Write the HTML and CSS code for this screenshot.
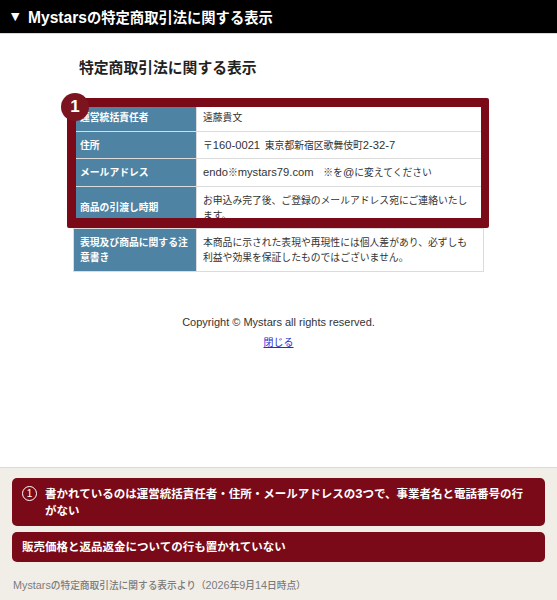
FILE: index.html
```html
<!DOCTYPE html>
<html lang="ja">
<head>
    <meta charset="UTF-8">
    <meta name="viewport" content="width=device-width, initial-scale=1.0">
    <title>Mystarsの特定商取引法に関する表示</title>
    <link rel="stylesheet" href="styles.css">
</head>
<body>
    <div class="page">
        <header class="top-bar">
            <span class="top-arrow">▼</span>
            <span><span class="top-latin">Mystars</span>の特定商取引法に関する表示</span>
        </header>

        <main class="content">
            <h1 class="page-title">特定商取引法に関する表示</h1>

            <div class="table-wrap">
                <table class="law-table">
                    <tr>
                        <th>運営統括責任者</th>
                        <td>遠藤貴文</td>
                    </tr>
                    <tr>
                        <th>住所</th>
                        <td>〒<span class="latin">160-0021</span> 東京都新宿区歌舞伎町<span class="latin">2-32-7</span></td>
                    </tr>
                    <tr>
                        <th>メールアドレス</th>
                        <td><span class="latin">endo</span>※<span class="latin">mystars79.com</span>　※を<span class="latin">@</span>に変えてください</td>
                    </tr>
                    <tr>
                        <th>商品の引渡し時期</th>
                        <td>お申込み完了後、ご登録のメールアドレス宛にご連絡いたします。</td>
                    </tr>
                    <tr>
                        <th>表現及び商品に関する注意書き</th>
                        <td>本商品に示された表現や再現性には個人差があり、必ずしも利益や効果を保証したものではございません。</td>
                    </tr>
                </table>

                <!-- highlight over the first four rows -->
                <div class="highlight"></div>
                <div class="badge">1</div>
            </div>

            <p class="copyright">Copyright © Mystars all rights reserved.</p>
            <a class="close-link" href="#">閉じる</a>
        </main>

        <footer class="notes">
            <div class="note">
                <span class="note-num">1</span>
                <span>書かれているのは運営統括責任者・住所・メールアドレスの<span class="note-latin">3</span>つで、事業者名と電話番号の行がない</span>
            </div>
            <div class="note">
                <span>販売価格と返品返金についての行も置かれていない</span>
            </div>
            <p class="source"><span class="source-latin">Mystars</span>の特定商取引法に関する表示より（<span class="source-latin">2026</span>年<span class="source-latin">9</span>月<span class="source-latin">14</span>日時点）</p>
        </footer>
    </div>
</body>
</html>
```

FILE: styles.css
```css
/* Global Styles */
body {
    margin: 0;
    font-family: "Liberation Sans", "Noto Sans CJK JP", sans-serif;
    background: #ffffff;
    color: #333333;
}

.page {
    display: flex;
    flex-direction: column;
    height: 600px;
    overflow: hidden;
}

/* Top bar */
.top-bar {
    display: flex;
    align-items: center;
    height: 34px;
    padding-left: 11px;
    background: #000000;
    border-bottom: 1px solid #d8d8d8;
    box-sizing: border-box;
    color: #ffffff;
    font-size: 14.3px;
    font-weight: bold;
}

.top-arrow {
    width: 17px;
    font-size: 11px;
    font-family: "DejaVu Sans", sans-serif;
}

.top-latin {
    font-size: 15.6px;
}

/* Main content */
.content {
    flex: 1;
    display: flex;
    flex-direction: column;
    align-items: center;
}

.page-title {
    align-self: flex-start;
    margin: 24px 0 0 79px;
    font-size: 14.8px;
    line-height: 20px;
    color: #222222;
}

.table-wrap {
    position: relative;
    align-self: flex-start;
    margin: 25px 0 0 73px;
}

.law-table {
    width: 411px;
    border-collapse: collapse;
    table-layout: fixed;
    font-size: 9.8px;
    line-height: 15px;
}

.law-table th,
.law-table td {
    padding: 6px 6px 5.5px;
    border: 1px solid #dcdcdc;
    text-align: left;
}

.law-table th {
    width: 110px;
    background: #4f83a3;
    color: #ffffff;
    font-weight: bold;
}

.law-table td {
    padding-right: 10px;
    background: #ffffff;
    color: #333333;
    word-spacing: 2px;
}

.latin {
    font-size: 11.2px;
}

.highlight {
    position: absolute;
    left: -6px;
    top: -5px;
    width: 422px;
    height: 130px;
    box-sizing: border-box;
    border-style: solid;
    border-color: #7a0a18;
    border-width: 9px 8px 10px 9px;
    border-radius: 2px;
}

.badge {
    position: absolute;
    left: -12px;
    top: -10px;
    width: 28px;
    height: 28px;
    border-radius: 50%;
    background: #7c1420;
    color: #ffffff;
    font-size: 17px;
    font-weight: bold;
    line-height: 28px;
    text-align: center;
}

.copyright {
    margin: 43px 0 0;
    font-size: 11px;
    line-height: 15px;
    color: #333333;
}

.close-link {
    margin-top: 5px;
    font-size: 10px;
    line-height: 15px;
    color: #2a2ad0;
}

/* Bottom notes */
.notes {
    height: 133px;
    padding: 10px 12px 0;
    box-sizing: border-box;
    background: #f1eee8;
    border-top: 1px solid #dedbd0;
}

.note {
    display: flex;
    align-items: flex-start;
    gap: 8px;
    margin-bottom: 6px;
    padding: 6.5px 18px 6.5px 10px;
    background: #7a0a18;
    border-radius: 5px;
    color: #ffffff;
    font-size: 11.5px;
    font-weight: bold;
    line-height: 17px;
}

.note-latin {
    font-size: 13px;
}

.note-num {
    flex: none;
    width: 13px;
    height: 13px;
    margin-top: 1px;
    border: 1px solid #ffffff;
    border-radius: 50%;
    font-size: 10px;
    font-weight: normal;
    line-height: 13px;
    text-align: center;
}

.source {
    margin: 16px 0 0 1px;
    font-size: 9.7px;
    font-weight: 500;
    line-height: 14px;
    color: #7b7b7b;
}

.source-latin {
    font-size: 10.8px;
}
```
